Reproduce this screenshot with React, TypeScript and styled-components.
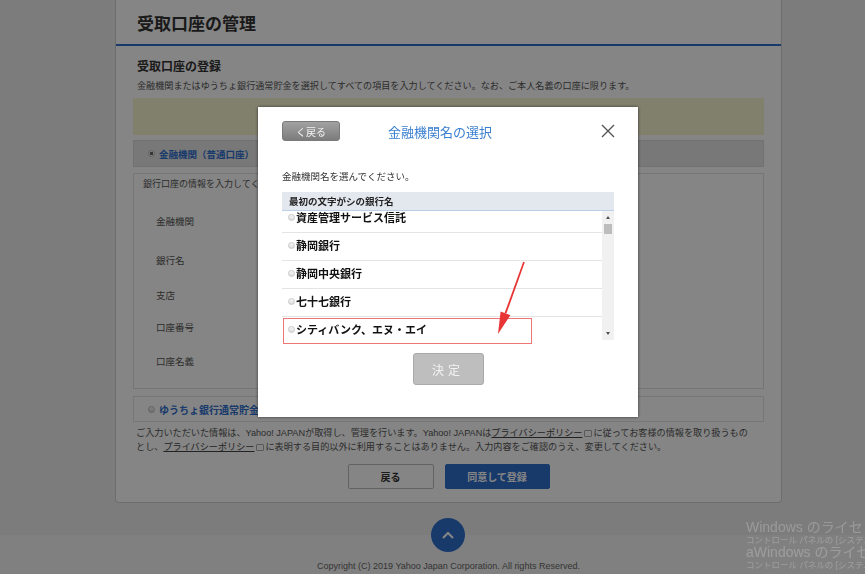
import React from "react"
import styled, { createGlobalStyle } from "styled-components"

const blue = "#2f6fce"

const GlobalStyle = createGlobalStyle`
    html, body {
        margin: 0;
        padding: 0;
    }
    body {
        width: 865px;
        height: 574px;
        overflow: hidden;
        background: #ededed;
        font-family: "Liberation Sans", "Noto Sans CJK JP", sans-serif;
        color: #333;
    }
    button {
        font-family: inherit;
        cursor: pointer;
    }
`

const Page = styled.div`
    height: 574px;
    display: flex;
    flex-direction: column;
`

const Card = styled.div`
    margin-left: 115px;
    width: 667px;
    box-sizing: border-box;
    background: #fff;
    border: 1px solid #d2d2d2;
    border-top: none;
    border-radius: 0 0 4px 4px;
    padding-bottom: 13px;
`

const PageHeader = styled.div`
    height: 44px;
    display: flex;
    align-items: center;
    padding-left: 21px;
    border-bottom: 2px solid ${blue};
`

const PageTitle = styled.h1`
    margin: 0;
    font-size: 17px;
    font-weight: 600;
    color: #333;
`

const Section = styled.div`
    padding: 0 17px;
`

const SubHeading = styled.h2`
    margin: 13px 0 0 4px;
    font-size: 12px;
    line-height: 16px;
    font-weight: 700;
    color: #333;
`

const Desc = styled.p`
    margin: 4px 0 0 4px;
    font-size: 9.1px;
    line-height: 14px;
    color: #555;
`

const NoticeBox = styled.div`
    margin-top: 5px;
    height: 37px;
    background: #f8f6d2;
`

const OptionBar = styled.div<{ $active?: boolean }>`
    margin-top: ${(p) => (p.$active ? 5 : 7)}px;
    height: ${(p) => (p.$active ? 27 : 26)}px;
    box-sizing: border-box;
    display: flex;
    align-items: center;
    padding-left: 14px;
    background: ${(p) => (p.$active ? "#e6e6e6" : "#fff")};
    border: 1px solid ${(p) => (p.$active ? "#d8d8d8" : "#e2e2e2")};
`

const Radio = styled.span<{ $checked?: boolean }>`
    width: 7px;
    height: 7px;
    border-radius: 50%;
    box-sizing: border-box;
    border: 1px solid #bbb;
    background: ${(p) =>
        p.$checked ? "radial-gradient(circle, #666 0 1.5px, #f4f4f4 2px)" : "linear-gradient(#f6f6f6, #d9d9d9)"};
    margin-right: 4px;
    flex-shrink: 0;
`

const OptionLabel = styled.span<{ $size: number }>`
    font-size: ${(p) => p.$size}px;
    font-weight: 700;
    color: ${blue};
`

const Panel = styled.div`
    margin-top: 6px;
    height: 216px;
    box-sizing: border-box;
    border: 1px solid #e0e0e0;
    padding: 3px 9px 0;
`

const PanelIntro = styled.div`
    font-size: 9px;
    line-height: 14px;
    color: #555;
    margin-bottom: 11px;
`

const FieldRow = styled.div<{ $h: number }>`
    height: ${(p) => p.$h}px;
    display: flex;
    align-items: center;
    padding-left: 13px;
    font-size: 9.5px;
    color: #555;
`

const Notice = styled.p`
    margin: 4px 0 0 3px;
    font-size: 9.15px;
    line-height: 14px;
    color: #555;
`

const PolicyLink = styled.span`
    text-decoration: underline;
    color: #444;
`

const ExtIcon = styled.span`
    display: inline-block;
    width: 6px;
    height: 5px;
    border: 1px solid #aaa;
    border-radius: 1px;
    margin: 0 1px 0 2px;
    vertical-align: middle;
`

const ButtonRow = styled.div`
    margin-top: 10px;
    display: flex;
    justify-content: center;
    gap: 11px;
`

const FormButton = styled.button<{ $primary?: boolean }>`
    height: 25px;
    width: ${(p) => (p.$primary ? 105 : 86)}px;
    border-radius: 2px;
    font-size: 10px;
    font-weight: 700;
    border: 1px solid ${(p) => (p.$primary ? blue : "#bcbcbc")};
    background: ${(p) => (p.$primary ? blue : "#fff")};
    color: ${(p) => (p.$primary ? "#fff" : "#333")};
`

const Footer = styled.div`
    margin-top: 32px;
    flex: 1;
    background: #f6f6f6;
`

const FooterInner = styled.div`
    position: relative;
    margin-left: 115px;
    width: 667px;
    padding-top: 25px;
    text-align: center;
    font-size: 9px;
    line-height: 12px;
    color: #666;
`

const ToTop = styled.button`
    position: absolute;
    top: -17px;
    left: 316px;
    width: 34px;
    height: 34px;
    border-radius: 50%;
    border: none;
    padding: 0;
    background: ${blue};
    display: flex;
    align-items: center;
    justify-content: center;
`

const Overlay = styled.div`
    position: fixed;
    inset: 0;
    background: rgba(0, 0, 0, 0.48);
    z-index: 10;
`

const Modal = styled.div`
    position: fixed;
    left: 258px;
    top: 107px;
    width: 380px;
    height: 310px;
    box-sizing: border-box;
    padding: 14px 24px 0;
    background: #fff;
    box-shadow: 0 0 3px rgba(0, 0, 0, 0.6);
    z-index: 20;
`

const ModalHeader = styled.div`
    height: 20px;
    display: flex;
    align-items: center;
`

const BackButton = styled.button`
    width: 58px;
    height: 20px;
    padding: 0;
    border: 1px solid #7a7a7a;
    border-radius: 3px;
    background: linear-gradient(#a2a2a2, #7c7c7c);
    color: #f2f2f2;
    font-size: 10px;
`

const ModalTitle = styled.div`
    margin-left: 48px;
    font-size: 13px;
    color: #3a7fd1;
`

const CloseButton = styled.button`
    margin-left: auto;
    margin-right: -1px;
    padding: 0;
    border: none;
    background: none;
    display: flex;
`

const Instruction = styled.div`
    margin-top: 30px;
    font-size: 9.5px;
    line-height: 12px;
    color: #333;
`

const TableHead = styled.div`
    margin-top: 9px;
    height: 19px;
    box-sizing: border-box;
    display: flex;
    align-items: center;
    padding-left: 7px;
    background: #e3e7ee;
    border-bottom: 1px solid #b9d0e8;
    font-size: 9.5px;
    font-weight: 700;
    color: #222;
`

const ListArea = styled.div`
    height: 129px;
    display: flex;
    overflow: hidden;
`

const Rows = styled.div`
    flex: 1;
    overflow: hidden;
`

const RowsInner = styled.div`
    margin-top: -6px;
`

const BankRow = styled.div`
    height: 28px;
    box-sizing: border-box;
    display: flex;
    align-items: center;
    padding: 0 0 3px 6px;
    border-bottom: 1px solid #e4e4e4;
    font-size: 11px;
    font-weight: 700;
    color: #111;
`

const BankRadio = styled.span`
    width: 7px;
    height: 7px;
    border-radius: 50%;
    box-sizing: border-box;
    border: 1px solid #c9c9c9;
    background: linear-gradient(#f7f7f7, #dcdcdc);
    margin-right: 1px;
    flex-shrink: 0;
`

const ScrollTrack = styled.div`
    width: 12px;
    background: #f1f1f1;
    display: flex;
    flex-direction: column;
    align-items: center;
    padding: 3px 0 3px;
    box-sizing: border-box;
`

const ScrollArrow = styled.span<{ $down?: boolean }>`
    width: 0;
    height: 0;
    border-left: 2.5px solid transparent;
    border-right: 2.5px solid transparent;
    ${(p) => (p.$down ? "border-top: 3px solid #505050;" : "border-bottom: 3px solid #505050;")}
    margin-top: ${(p) => (p.$down ? "auto" : "2px")};
    margin-bottom: ${(p) => (p.$down ? "2px" : "0")};
`

const ScrollThumb = styled.span`
    margin-top: 5px;
    width: 8px;
    height: 10px;
    background: #bdbdbd;
`

const DecideButton = styled.button`
    display: block;
    margin: 13px auto 0;
    width: 71px;
    height: 32px;
    border: 1px solid #a9a9a9;
    border-radius: 3px;
    background: #bebebe;
    color: #f4f4f4;
    font-size: 12px;
    letter-spacing: 4px;
    padding-left: 6px;
`

const Highlight = styled.div`
    position: absolute;
    left: 25px;
    top: 211px;
    width: 249px;
    height: 26px;
    box-sizing: border-box;
    border: 1px solid #f07575;
    pointer-events: none;
`

const ArrowLayer = styled.svg`
    position: absolute;
    left: 0;
    top: 0;
    pointer-events: none;
`

const Watermark = styled.div`
    position: fixed;
    left: 746px;
    top: 521px;
    right: 0;
    bottom: 0;
    overflow: hidden;
    white-space: nowrap;
    color: rgba(255, 255, 255, 0.22);
    z-index: 30;
    font-family: "Liberation Sans", "Noto Sans CJK JP", sans-serif;
`

const WmLine = styled.div<{ $big?: boolean }>`
    font-size: ${(p) => (p.$big ? 14 : 8.5)}px;
    line-height: ${(p) => (p.$big ? 17 : 11)}px;
    margin-top: ${(p) => (p.$big ? -2 : -1)}px;
`

const banks = ["資産管理サービス信託", "静岡銀行", "静岡中央銀行", "七十七銀行", "シティバンク、エヌ・エイ"]

const fields = [
    { label: "金融機関", h: 38 },
    { label: "銀行名", h: 40 },
    { label: "支店", h: 30 },
    { label: "口座番号", h: 34 },
    { label: "口座名義", h: 34 },
]

export default function App() {
    return (
        <>
            <GlobalStyle />
            <Page>
                <Card>
                    <PageHeader>
                        <PageTitle>受取口座の管理</PageTitle>
                    </PageHeader>
                    <Section>
                        <SubHeading>受取口座の登録</SubHeading>
                        <Desc>
                            金融機関またはゆうちょ銀行通常貯金を選択してすべての項目を入力してください。なお、ご本人名義の口座に限ります。
                        </Desc>
                        <NoticeBox />
                        <OptionBar $active>
                            <Radio $checked />
                            <OptionLabel $size={9.5}>金融機関（普通口座）</OptionLabel>
                        </OptionBar>
                        <Panel>
                            <PanelIntro>銀行口座の情報を入力してください。</PanelIntro>
                            {fields.map((f) => (
                                <FieldRow key={f.label} $h={f.h}>
                                    {f.label}
                                </FieldRow>
                            ))}
                        </Panel>
                        <OptionBar>
                            <Radio />
                            <OptionLabel $size={10}>ゆうちょ銀行通常貯金</OptionLabel>
                        </OptionBar>
                        <Notice>
                            ご入力いただいた情報は、Yahoo! JAPANが取得し、管理を行います。Yahoo! JAPANは
                            <PolicyLink>プライバシーポリシー</PolicyLink>
                            <ExtIcon />
                            に従ってお客様の情報を取り扱うもの
                            <br />
                            とし、<PolicyLink>プライバシーポリシー</PolicyLink>
                            <ExtIcon />
                            に表明する目的以外に利用することはありません。入力内容をご確認のうえ、変更してください。
                        </Notice>
                        <ButtonRow>
                            <FormButton>戻る</FormButton>
                            <FormButton $primary>同意して登録</FormButton>
                        </ButtonRow>
                    </Section>
                </Card>
                <Footer>
                    <FooterInner>
                        <ToTop aria-label="ページの先頭へ">
                            <svg width="14" height="9" viewBox="0 0 14 9">
                                <path d="M2 7 L7 2 L12 7" fill="none" stroke="#fff" strokeWidth="2" />
                            </svg>
                        </ToTop>
                        Copyright (C) 2019 Yahoo Japan Corporation. All rights Reserved.
                    </FooterInner>
                </Footer>
            </Page>

            <Overlay />

            <Modal>
                <ModalHeader>
                    <BackButton>く戻る</BackButton>
                    <ModalTitle>金融機関名の選択</ModalTitle>
                    <CloseButton aria-label="閉じる">
                        <svg width="14" height="14" viewBox="0 0 14 14">
                            <path d="M1 1 L13 13 M13 1 L1 13" stroke="#555" strokeWidth="1.4" />
                        </svg>
                    </CloseButton>
                </ModalHeader>
                <Instruction>金融機関名を選んでください。</Instruction>
                <TableHead>最初の文字がシの銀行名</TableHead>
                <ListArea>
                    <Rows>
                        <RowsInner>
                            {banks.map((b) => (
                                <BankRow key={b}>
                                    <BankRadio />
                                    {b}
                                </BankRow>
                            ))}
                        </RowsInner>
                    </Rows>
                    <ScrollTrack>
                        <ScrollArrow />
                        <ScrollThumb />
                        <ScrollArrow $down />
                    </ScrollTrack>
                </ListArea>
                <DecideButton>決定</DecideButton>

                <Highlight />
                <ArrowLayer width="380" height="310" viewBox="0 0 380 310">
                    <path d="M266.8 155.2 L265.2 154.8 L246.6 206 L248.4 206.6 Z" fill="#e83535" />
                    <path d="M240 227 L252.4 208.2 L242.6 204.6 Z" fill="#e83535" />
                </ArrowLayer>
            </Modal>

            <Watermark>
                <WmLine $big>Windows のライセンス認証</WmLine>
                <WmLine>コントロール パネルの [システム] で Windows のライセンス認証を行ってください。</WmLine>
                <WmLine $big>aWindows のライセンス認証</WmLine>
                <WmLine>コントロール パネルの [システム] で Windows のライセンス認証を行ってください。</WmLine>
            </Watermark>
        </>
    )
}
